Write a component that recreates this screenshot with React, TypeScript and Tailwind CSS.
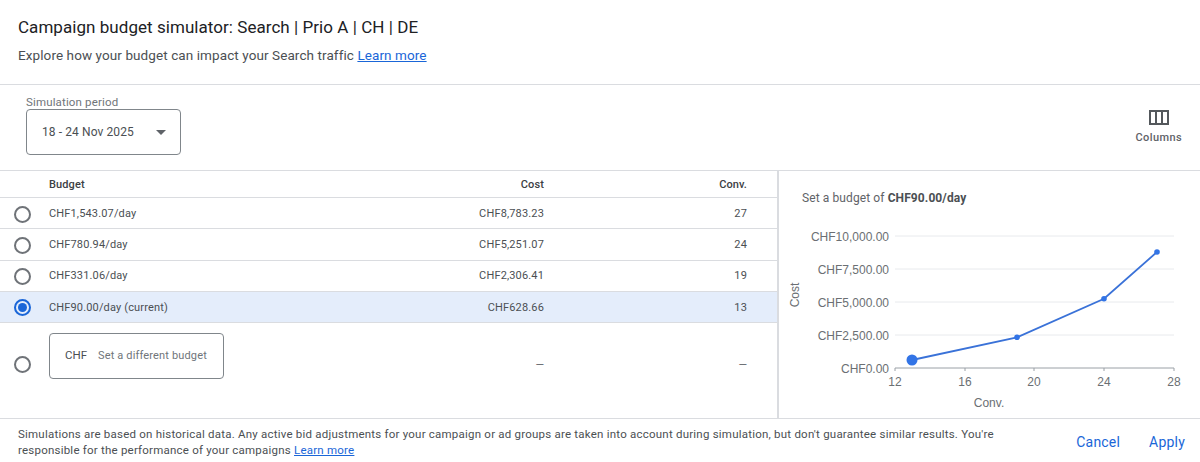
const rows = [
  { budget: "CHF1,543.07/day", cost: "CHF8,783.23", conv: "27" },
  { budget: "CHF780.94/day", cost: "CHF5,251.07", conv: "24" },
  { budget: "CHF331.06/day", cost: "CHF2,306.41", conv: "19" },
  { budget: "CHF90.00/day (current)", cost: "CHF628.66", conv: "13", selected: true },
];

const yTicks = [
  { label: "CHF10,000.00", y: 31 },
  { label: "CHF7,500.00", y: 64 },
  { label: "CHF5,000.00", y: 97 },
  { label: "CHF2,500.00", y: 130 },
];
const xTicks = [
  { label: "12", x: 116 },
  { label: "16", x: 186 },
  { label: "20", x: 255 },
  { label: "24", x: 325 },
  { label: "28", x: 395 },
];
// chart points, svg coords
const points = [
  { x: 133, y: 155, r: 5.5 },
  { x: 238, y: 132.3, r: 2.8 },
  { x: 325, y: 93.7, r: 2.8 },
  { x: 378, y: 47, r: 2.8 },
];

const Radio = ({ checked }: { checked?: boolean }) => (
  <div
    className={`w-[17px] h-[17px] rounded-full border-2 flex items-center justify-center shrink-0 ${
      checked ? "border-[#1a66d8]" : "border-[#6f7378]"
    }`}
  >
    {checked && <div className="w-[9px] h-[9px] rounded-full bg-[#1a66d8]" />}
  </div>
);

const Chart = () => (
  <svg width={421} height={184} className="block" style={{ fontFamily: "'Liberation Sans', Arial, sans-serif" }}>
    {yTicks.map((t) => (
      <g key={t.label}>
        <line x1={116} x2={395} y1={t.y} y2={t.y} stroke="#e8eaed" strokeWidth={1} />
        <text x={110} y={t.y + 4.5} textAnchor="end" fontSize={12} fill="#6b6f73">
          {t.label}
        </text>
      </g>
    ))}
    <text x={110} y={167.5} textAnchor="end" fontSize={12} fill="#6b6f73">
      CHF0.00
    </text>
    <line x1={116} x2={395} y1={163} y2={163} stroke="#9aa0a6" strokeWidth={1} />
    {xTicks.map((t) => (
      <g key={t.label}>
        <line x1={t.x} x2={t.x} y1={163} y2={166} stroke="#9aa0a6" strokeWidth={1} />
        <text x={t.x} y={181} textAnchor="middle" fontSize={12} fill="#6b6f73">
          {t.label}
        </text>
      </g>
    ))}
    <text transform="translate(20 90) rotate(-90)" textAnchor="middle" fontSize={12} fill="#6b6f73">
      Cost
    </text>
    <polyline
      points={points.map((p) => `${p.x},${p.y}`).join(" ")}
      fill="none"
      stroke="#3a72d8"
      strokeWidth={1.8}
    />
    {points.map((p) => (
      <circle key={p.x} cx={p.x} cy={p.y} r={p.r} fill="#3274e6" />
    ))}
  </svg>
);

export default function App() {
  return (
    <div className="w-[1200px] h-[462px] bg-white overflow-hidden font-['Roboto',sans-serif] text-[#3c4043]">
      {/* Title */}
      <div className="h-[85px] border-b border-[#dadce0] pl-[18px] pt-[16px]">
        <h1 className="text-[17px] leading-[22px] tracking-[0.05px] text-[#202124]">
          Campaign budget simulator: Search | Prio A | CH | DE
        </h1>
        <p className="mt-[7px] text-[13.5px] leading-[20px] tracking-[0.09px] text-[#4b4f53]">
          Explore how your budget can impact your Search traffic{" "}
          <span className="text-[#1a66d8] underline">Learn more</span>
        </p>
      </div>

      {/* Toolbar */}
      <div className="h-[86px] border-b border-[#dadce0] flex justify-between pl-[26px] pr-[18px] pt-[10px]">
        <div>
          <div className="text-[11.5px] leading-[14px] tracking-[0.15px] text-[#70757a]">Simulation period</div>
          <div className="w-[155px] h-[46px] border border-[#80868b] rounded-[4px] flex items-center justify-between pl-[15px] pr-[14px]">
            <span className="text-[12px] text-[#4b4f53] tracking-[0.1px]">18 - 24 Nov 2025</span>
            <span className="w-0 h-0 border-x-[5px] border-x-transparent border-t-[5px] border-t-[#5f6368]" />
          </div>
        </div>
        <div className="flex flex-col items-center pt-[15px]">
          <svg width="20" height="15" viewBox="0 0 20 15" fill="none" stroke="#54585c" strokeWidth="2">
            <rect x="1" y="1" width="18" height="13" />
            <path d="M7 1v13M13 1v13" />
          </svg>
          <span className="mt-[6px] text-[11px] leading-[14px] font-medium tracking-[0.4px] text-[#5f6368]">Columns</span>
        </div>
      </div>

      {/* Table + chart */}
      <div className="h-[247px] flex">
        <div className="w-[779px] border-r-2 border-[#dadce0] shrink-0">
          <div className="h-[27px] pt-[2px] border-b border-[#dadce0] flex items-center text-[11px] font-medium text-[#3c4043] tracking-[0.1px]">
            <div className="w-[49px] shrink-0" />
            <div className="flex-1">Budget</div>
            <div className="w-[150px] text-right">Cost</div>
            <div className="w-[203px] text-right">Conv.</div>
            <div className="w-[30px] shrink-0" />
          </div>
          {rows.map((r) => (
            <div
              key={r.budget}
              className={`h-[31.25px] pt-[2px] border-b border-[#dadce0] flex items-center text-[11px] tracking-[0.15px] text-[#4b4f53] ${
                r.selected ? "bg-[#e4edfb]" : ""
              }`}
            >
              <div className="w-[49px] shrink-0 flex justify-center pr-[5px]">
                <Radio checked={r.selected} />
              </div>
              <div className="flex-1">{r.budget}</div>
              <div className="w-[150px] text-right">{r.cost}</div>
              <div className="w-[203px] text-right">{r.conv}</div>
              <div className="w-[30px] shrink-0" />
            </div>
          ))}
          <div className="flex items-start pt-[10px] text-[11px] text-[#5f6368]">
            <div className="w-[49px] shrink-0 flex justify-center pr-[5px] pt-[23px]">
              <Radio />
            </div>
            <div className="flex-1">
              <div className="w-[175px] h-[46px] border border-[#80868b] rounded-[4px] flex items-center pl-[15px]">
                <span className="text-[#4b4f53] text-[11.5px]">CHF</span>
                <span className="ml-[11px] text-[11px] tracking-[0.15px] text-[#70757a]">Set a different budget</span>
              </div>
            </div>
            <div className="w-[150px] text-right pt-[24px] text-[#5f6368]">—</div>
            <div className="w-[203px] text-right pt-[24px] text-[#5f6368]">—</div>
            <div className="w-[30px] shrink-0" />
          </div>
        </div>
        <div className="flex-1">
          <div className="pl-[23px] pt-[20px] text-[12px] leading-[14px] tracking-[0.1px] text-[#5f6368]">
            Set a budget of <b className="font-bold text-[#4b4f53]">CHF90.00/day</b>
          </div>
          <Chart />
          <div className="text-center pr-[1px] w-[421px] mt-[7px] text-[12px] leading-[14px] font-['Liberation_Sans',sans-serif] text-[#6b6f73]">
            Conv.
          </div>
        </div>
      </div>

      {/* Footer */}
      <div className="h-[44px] border-t border-[#dadce0] flex pl-[18px] pr-[15px] pt-[8px]">
        <p className="w-[985px] text-[11.5px] leading-[15.5px] tracking-[0.22px] text-[#4b4f53]">
          Simulations are based on historical data. Any active bid adjustments for your campaign or ad groups are taken
          into account during simulation, but don't guarantee similar results. You're responsible for the performance
          of your campaigns <span className="text-[#1a66d8] underline">Learn more</span>
        </p>
        <div className="ml-auto flex gap-[29px] pt-[7px] text-[14px] leading-[16px] tracking-[0.2px] text-[#1a66d8]">
          <span>Cancel</span>
          <span>Apply</span>
        </div>
      </div>
    </div>
  );
}
